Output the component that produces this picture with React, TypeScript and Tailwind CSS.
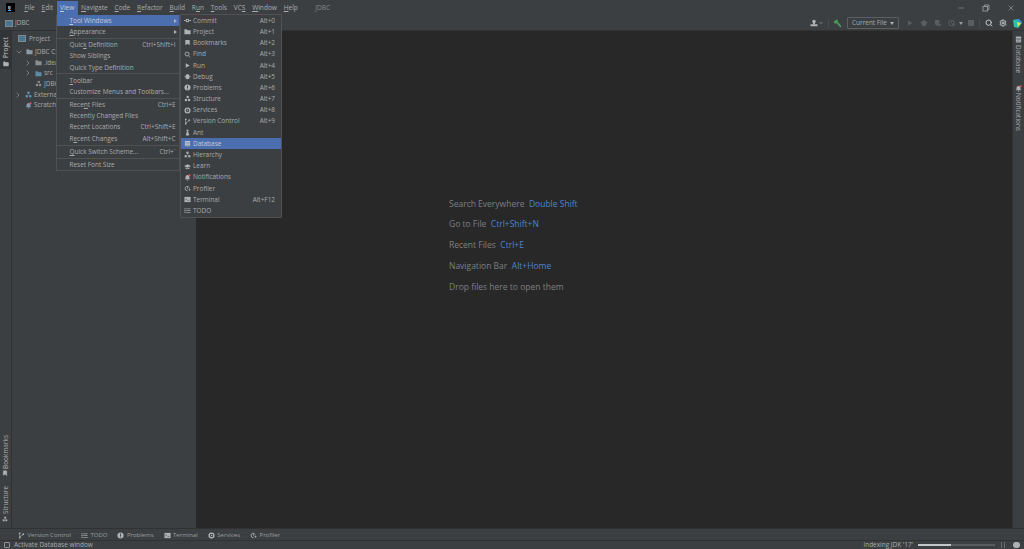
import React from "react";
import { Search, Settings, ChevronRight, ChevronDown, Minus, X, Folder, Bookmark } from "lucide-react";

const I = ({ d, s = 8, c = "#afb1b3" }: { d: React.ReactNode; s?: number; c?: string }) => (
  <svg width={s} height={s} viewBox="0 0 16 16" fill={c} className="shrink-0">{d}</svg>
);
const icons: Record<string, React.ReactNode> = {
  commit: <><circle cx="8" cy="8" r="3" fill="none" stroke="#afb1b3" strokeWidth="2.4" /><rect x="0" y="7" width="5" height="2" /><rect x="11" y="7" width="5" height="2" /></>,
  folder: <path d="M1 3h5l2 2h7v9H1z" />,
  bookmark: <path d="M3 2h10v12l-5-3-5 3z" />,
  find: <><circle cx="7" cy="7" r="4.5" fill="none" stroke="#afb1b3" strokeWidth="2" /><path d="M10 11l1-1 4 4-1 1z" /></>,
  run: <path d="M4 3l9 5-9 5z" />,
  debug: <><ellipse cx="8" cy="8.5" rx="5" ry="6" /><rect x="0" y="7" width="16" height="1" /></>,
  problems: <><circle cx="8" cy="8" r="7" /><rect x="7" y="3.5" width="2" height="6" fill="#3c3f41" /><rect x="7" y="10.5" width="2" height="2" fill="#3c3f41" /></>,
  structure: <><rect x="6" y="2" width="5" height="5" /><rect x="2" y="9" width="5" height="5" /><rect x="9" y="9" width="5" height="5" /></>,
  services: <><circle cx="8" cy="8" r="5.5" fill="none" stroke="#afb1b3" strokeWidth="3" /><path d="M6.5 5.5l4 2.5-4 2.5z" /></>,
  vcs: <><circle cx="4" cy="3" r="2" /><circle cx="4" cy="13" r="2" /><circle cx="12" cy="5" r="2" /><rect x="3.3" y="3" width="1.4" height="10" /><path d="M4 10l7-4 1 1-8 5z" /></>,
  ant: <><ellipse cx="8" cy="3.5" rx="2.5" ry="2.5" /><ellipse cx="8" cy="7.5" rx="2.5" ry="2" /><ellipse cx="8" cy="12" rx="3.5" ry="3.5" /></>,
  database: <><rect x="2" y="2" width="12" height="12" rx="1.5" /><rect x="3" y="5.5" width="10" height="1" fill="#4b6eaf" /><rect x="3" y="8.5" width="10" height="1" fill="#4b6eaf" /><rect x="3" y="11.5" width="10" height="1" fill="#4b6eaf" /></>,
  databaseDim: <><rect x="2" y="1" width="12" height="14" rx="2" /><rect x="3" y="5" width="10" height="1" fill="#3c3f41" /><rect x="3" y="8" width="10" height="1" fill="#3c3f41" /><rect x="3" y="11" width="10" height="1" fill="#3c3f41" /></>,
  hierarchy: <><rect x="5.5" y="1.5" width="5" height="5" /><rect x="1.5" y="9.5" width="5" height="5" /><rect x="9.5" y="9.5" width="5" height="5" /><rect x="7.5" y="6" width="1" height="4" /></>,
  learn: <><path d="M8 3l8 4-8 4-8-4z" /><path d="M3 10v2.5c3 2 7 2 10 0V10l-5 2.5z" /></>,
  notifications: <><path d="M8 2c3 0 4.5 2.5 4.5 5v3l2 2H1.500l2-2V7c0-2.500 1.500-5 4.500-5z" /><rect x="6.500" y="13" width="3" height="2" /><circle cx="12.500" cy="3" r="2.600" fill="#e05555" /></>,
  profiler: <><path d="M12 6a5 5 0 1 0-4 7" fill="none" stroke="#afb1b3" strokeWidth="2" /><rect x="7.300" y="4" width="1.500" height="5" /><rect x="10" y="10" width="5" height="1.500" /><rect x="11.800" y="8.200" width="1.500" height="5" /></>,
  terminal: <><rect x="1" y="2" width="14" height="12" /><path d="M3.500 5l3 2.500-3 2.500V8.500L5 7.500 3.500 6.500z" fill="#3c3f41" /><rect x="8" y="9" width="4" height="1.300" fill="#3c3f41" /></>,
  todo: <><rect x="1" y="3" width="2.500" height="2.500" /><rect x="1" y="7" width="2.500" height="2.500" /><rect x="1" y="11" width="2.500" height="2.500" /><rect x="5" y="3.500" width="10" height="1.500" /><rect x="5" y="7.500" width="10" height="1.500" /><rect x="5" y="11.500" width="10" height="1.500" /></>,
  user: <><circle cx="8" cy="5" r="3.500" /><rect x="6" y="7" width="4" height="4" /><rect x="1" y="10.500" width="14" height="4" /></>,
  hammer: <><path d="M1 5l5-4 3 1-1 2 7 9-2 2-7-8-2 2z" /></>,
  shield: <><path d="M2 2h9v5l-2 1v4l-2.500 2C4 13 2 11 2 8z" /><path d="M9 8l6 3.500-6 3.500z" /></>,
  prof: <><circle cx="7" cy="8" r="5.500" fill="none" stroke="#5b5e60" strokeWidth="2" /><rect x="6.300" y="4" width="1.500" height="5" /><path d="M9 8l6 3.500-6 3.500z" /></>,
};

const U = ({ t, i = 0 }: { t: string; i?: number }) => (
  <>
    {t.slice(0, i)}
    <span className="underline underline-offset-1">{t[i]}</span>
    {t.slice(i + 1)}
  </>
);

const menuBar: [string, number][] = [["File", 0], ["Edit", 0], ["View", 0], ["Navigate", 0], ["Code", 0], ["Refactor", 0], ["Build", 0], ["Run", 1], ["Tools", 0], ["VCS", 2], ["Window", 0], ["Help", 0]];

type Row = { t?: string; u?: number; k?: string; arrow?: boolean; active?: boolean; sep?: boolean };
const viewMenu: Row[] = [
  { t: "Tool Windows", u: 0, arrow: true, active: true },
  { t: "Appearance", u: 0, arrow: true },
  { sep: true },
  { t: "Quick Definition", u: 4, k: "Ctrl+Shift+I" },
  { t: "Show Siblings" },
  { t: "Quick Type Definition" },
  { sep: true },
  { t: "Toolbar", u: 0 },
  { t: "Customize Menus and Toolbars..." },
  { sep: true },
  { t: "Recent Files", u: 4, k: "Ctrl+E" },
  { t: "Recently Changed Files" },
  { t: "Recent Locations", k: "Ctrl+Shift+E" },
  { t: "Recent Changes", u: 1, k: "Alt+Shift+C" },
  { sep: true },
  { t: "Quick Switch Scheme...", u: 0, k: "Ctrl+`" },
  { sep: true },
  { t: "Reset Font Size" },
];

const toolMenu: [string, string, string][] = [
  ["commit", "Commit", "Alt+0"], ["folder", "Project", "Alt+1"], ["bookmark", "Bookmarks", "Alt+2"], ["find", "Find", "Alt+3"],
  ["run", "Run", "Alt+4"], ["debug", "Debug", "Alt+5"], ["problems", "Problems", "Alt+6"], ["structure", "Structure", "Alt+7"],
  ["services", "Services", "Alt+8"], ["vcs", "Version Control", "Alt+9"], ["ant", "Ant", ""], ["database", "Database", ""],
  ["hierarchy", "Hierarchy", ""], ["learn", "Learn", ""], ["notifications", "Notifications", ""], ["profiler", "Profiler", ""],
  ["terminal", "Terminal", "Alt+F12"], ["todo", "TODO", ""],
];

const bottom: [string, string][] = [["vcs", "Version Control"], ["todo", "TODO"], ["problems", "Problems"], ["terminal", "Terminal"], ["services", "Services"], ["profiler", "Profiler"]];

const hints: [string, string][] = [["Search Everywhere", "Double Shift"], ["Go to File", "Ctrl+Shift+N"], ["Recent Files", "Ctrl+E"], ["Navigation Bar", "Alt+Home"], ["Drop files here to open them", ""]];

const Tree = ({ pad, arrow, open, icon, label }: { pad: number; arrow?: boolean; open?: boolean; icon: React.ReactNode; label: string }) => (
  <div className="flex h-[10.700px] items-center whitespace-nowrap" style={{ paddingLeft: pad }}>
    <span className="flex w-[9px] shrink-0 items-center">
      {arrow && (open ? <ChevronDown size={8} color="#9a9c9e" /> : <ChevronRight size={8} color="#9a9c9e" />)}
    </span>
    <span className="ml-[2px] mr-[2px] flex items-center">{icon}</span>
    <span>{label}</span>
  </div>
);

export default function App() {
  return (
    <div className="relative flex h-[549px] w-[1024px] flex-col overflow-hidden bg-[#3c3f41] font-['Open_Sans','Noto_Sans',sans-serif] text-[6.450px] text-[#a9abad]">
      {/* title bar */}
      <div className="flex h-[15px] shrink-0 items-center pt-[0.500px] text-[6.550px]">
        <div className="ml-[6px] flex h-[9px] w-[9px] flex-col justify-end bg-black pb-[1px] pl-[2px] text-[4px] leading-[4px] text-white">
          <span className="font-bold">IJ</span>
          <div className="h-[1px] w-[3px] bg-[#4aa8e8]" />
        </div>
        <div className="ml-[6px] flex h-full items-center">
          {menuBar.map(([m, u]) => (
            <div key={m} className={`flex h-full items-center px-[3.400px] ${m === "View" ? "bg-[#4b6eaf] text-[#c8ccd4]" : ""}`}>
              <U t={m} i={u} />
            </div>
          ))}
        </div>
        <div className="ml-[14px] text-[#85878a]">JDBC</div>
        <div className="ml-auto mr-[9px] flex items-center gap-[17px]">
          <Minus size={8} color="#8f9193" />
          <svg width="8" height="8" viewBox="0 0 8 8" fill="none" stroke="#8f9193"><rect x="1" y="2.500" width="4.500" height="4.500" /><path d="M2.500 2.500V1h4.500v4.500H5.500" /></svg>
          <X size={8} color="#9a9c9e" />
        </div>
      </div>
      {/* nav bar */}
      <div className="flex h-[16px] shrink-0 items-center border-b border-[#323232] pt-[1px]">
        <div className="ml-[5px] h-[7px] w-[8px] border border-[#7f8b91] bg-[#4a7590]" />
        <span className="ml-[2px]">JDBC</span>
        <div className="ml-auto flex items-center">
          <I d={icons.user} s={8} c="#afb1b3" />
          <ChevronDown size={6} color="#afb1b3" />
          <div className="mx-[4px] h-[9px] w-px bg-[#4a4d4f]" />
          <I d={icons.hammer} s={9} c="#499c54" />
          <div className="ml-[5px] flex h-[12px] w-[52px] items-center justify-between rounded-[1px] border border-[#5e6060] px-[4px]">
            <span>Current File</span>
            <span className="h-0 w-0 border-x-[2.500px] border-t-[3px] border-x-transparent border-t-[#afb1b3]" />
          </div>
          <div className="ml-[7px] flex items-center gap-[6px]">
            <I d={icons.run} s={8} c="#5b5e60" />
            <I d={icons.debug} s={8} c="#5b5e60" />
            <I d={icons.shield} s={8} c="#5b5e60" />
            <I d={icons.prof} s={8} c="#5b5e60" />
          </div>
          <span className="ml-[3px] h-0 w-0 border-x-[2.500px] border-t-[3px] border-x-transparent border-t-[#9a9c9e]" />
          <div className="ml-[5px] h-[6px] w-[6px] bg-[#5b5e60]" />
          <div className="mx-[5px] h-[9px] w-px bg-[#4a4d4f]" />
          <Search size={8} color="#c4c6c8" strokeWidth={3} />
          <Settings size={8} color="#c4c6c8" strokeWidth={3} className="ml-[6px]" />
          <svg width="9" height="9" viewBox="0 0 9 9" className="ml-[6px] mr-[2px]"><path d="M0 1l5-1 4 4-4 5-4-1z" fill="#22c3a8" /><path d="M3 0l3 0 3 3-2 2z" fill="#3b8de0" /><path d="M4 3l4 1-3 4z" fill="#e5e04a" /></svg>
        </div>
      </div>
      {/* main */}
      <div className="flex min-h-0 flex-1">
        {/* left strip */}
        <div className="flex w-[12px] shrink-0 flex-col items-center border-r border-[#323232]">
          <div className="flex h-[38px] w-[11px] flex-col items-center justify-end bg-[#323537] pb-[2px] text-[#c0c2c4]">
            <span className="rotate-180 [writing-mode:vertical-rl]">Project</span>
            <Folder size={6} color="#afb1b3" fill="#afb1b3" className="mt-[3px]" />
          </div>
          <div className="mt-auto flex flex-col items-center pb-[6px]">
            <span className="rotate-180 [writing-mode:vertical-rl]">Bookmarks</span>
            <Bookmark size={6} color="#afb1b3" fill="#afb1b3" className="mt-[1px]" />
            <span className="mt-[10px] rotate-180 [writing-mode:vertical-rl]">Structure</span>
            <div className="mt-[2px]"><I d={icons.structure} s={6} /></div>
          </div>
        </div>
        {/* project panel */}
        <div className="w-[184px] shrink-0 overflow-hidden">
          <div className="flex h-[15px] items-center pl-[6px]">
            <div className="mr-[3px] h-[7px] w-[8px] border border-[#7f8b91] bg-[#4a7590]" />
            <span>Project</span>
          </div>
          <div className="mt-[0.500px]">
            <Tree pad={3} arrow open icon={<I d={icons.folder} s={7} c="#8a9aa6" />} label="JDBC C:" />
            <Tree pad={12} arrow icon={<I d={icons.folder} s={7} c="#8c8f91" />} label=".idea" />
            <Tree pad={12} arrow icon={<I d={icons.folder} s={7} c="#5d8aa8" />} label="src" />
            <Tree pad={12} icon={<I d={icons.structure} s={7} c="#8c8f91" />} label="JDBC.iml" />
            <Tree pad={2} arrow icon={<I d={icons.hierarchy} s={7} c="#6897bb" />} label="External Libraries" />
            <Tree pad={2} icon={<I d={icons.notifications} s={7} c="#7d9cb5" />} label="Scratches and Consoles" />
          </div>
        </div>
        {/* editor */}
        <div className="flex flex-1 flex-col items-start bg-[#282828] pl-[253px] pt-[162.500px] text-[8.500px] text-[#7d7f81]">
          {hints.map(([a, b]) => (
            <div key={a} className="flex h-[20.800px] items-center whitespace-nowrap">
              <span>{a}</span>
              {b && <span className="ml-[4.500px] text-[#4a84d0]">{b}</span>}
            </div>
          ))}
        </div>
        {/* right strip */}
        <div className="flex w-[12px] shrink-0 flex-col items-center border-l border-[#323232] pt-[5px]">
          <I d={icons.databaseDim} s={7} />
          <span className="mt-[2px] [writing-mode:vertical-rl]">Database</span>
          <div className="mt-[12px]"><I d={icons.notifications} s={7} /></div>
          <span className="mt-[1px] [writing-mode:vertical-rl]">Notifications</span>
        </div>
      </div>
      {/* bottom tool bar */}
      <div className="flex h-[12px] shrink-0 items-center border-t border-[#323232] pl-[18px] pt-[1px] text-[6px] text-[#9b9d9f]">
        {bottom.map(([ic, t]) => (
          <div key={t} className="mr-[10px] flex items-center gap-[2.500px]">
            <I d={icons[ic]} s={7} />
            <span>{t}</span>
          </div>
        ))}
      </div>
      {/* status bar */}
      <div className="flex h-[9px] shrink-0 items-center border-t border-[#323232] pl-[4px]">
        <div className="h-[6px] w-[6px] rounded-[1px] border border-[#8f9193]" />
        <span className="ml-[4px]">Activate Database window</span>
        <div className="ml-auto flex items-center">
          <span>Indexing JDK '17'</span>
          <div className="ml-[5px] h-[1.500px] w-[77px] bg-[#5a5d5f]">
            <div className="h-full w-[33px] bg-[#c4c6c8]" />
          </div>
          <div className="ml-[6px] h-[6px] w-[4px] border-x border-[#6b6e70]" />
          <div className="ml-[8px] mr-[4px] h-[6px] w-[7px] rounded-full bg-[#afb1b3]" />
        </div>
      </div>

      {/* View menu */}
      <div className="absolute left-[56px] top-[15px] w-[124px] border-x border-b border-[#515151] bg-[#3c3f41]">
        {viewMenu.map((r, i) =>
          r.sep ? (
            <div key={i} className="my-[0.500px] h-px bg-[#515151]" />
          ) : (
            <div key={i} className={`flex h-[11.200px] items-center justify-between whitespace-nowrap pl-[12.500px] pr-[2px] ${r.active ? "bg-[#4b6eaf] text-[#c8ccd4]" : ""}`}>
              <span>{r.u === undefined ? r.t : <U t={r.t!} i={r.u} />}</span>
              {r.k && <span className="pr-[1.500px]">{r.k}</span>}
              {r.arrow && <span className="h-0 w-0 border-y-[2.500px] border-l-[3px] border-y-transparent border-l-[#b0b2b4]" />}
            </div>
          )
        )}
      </div>
      {/* Tool windows submenu */}
      <div className="absolute left-[180px] top-[14px] w-[102px] rounded-b-[1px] border border-[#515151] bg-[#3c3f41] pb-[1px]">
        {toolMenu.map(([ic, t, k]) => (
          <div key={t} className={`flex h-[11.200px] items-center whitespace-nowrap pl-[2.500px] pr-[6px] ${t === "Database" ? "bg-[#4b6eaf] text-[#c8ccd4]" : ""}`}>
            <I d={icons[ic]} s={7} c={t === "Database" ? "#c0c4cc" : "#afb1b3"} />
            <span className="ml-[2.500px]">{t}</span>
            <span className="ml-auto">{k}</span>
          </div>
        ))}
      </div>
    </div>
  );
}
